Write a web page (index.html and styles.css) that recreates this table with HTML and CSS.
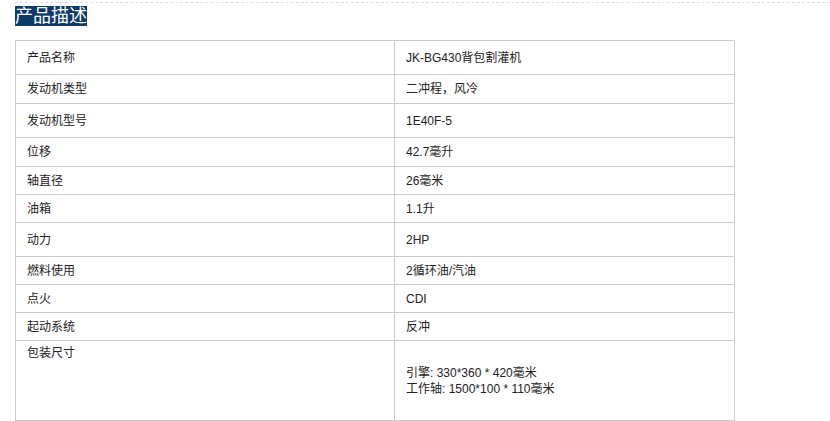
FILE: index.html
```html
<!DOCTYPE html>
<html lang="zh">
<head>
<meta charset="utf-8">
<title>产品描述</title>
<link rel="stylesheet" href="styles.css">
</head>
<body>
<div class="page">
  <div class="heading"><span class="heading-text">产品描述</span></div>
  <table class="spec">
    <tr class="tall"><td class="k">产品名称</td><td class="v">JK-BG430背包割灌机</td></tr>
    <tr class="mid"><td class="k">发动机类型</td><td class="v">二冲程，风冷</td></tr>
    <tr class="tall"><td class="k">发动机型号</td><td class="v">1E40F-5</td></tr>
    <tr class="mid"><td class="k">位移</td><td class="v">42.7毫升</td></tr>
    <tr class="short"><td class="k">轴直径</td><td class="v">26毫米</td></tr>
    <tr class="short"><td class="k">油箱</td><td class="v">1.1升</td></tr>
    <tr class="tall"><td class="k">动力</td><td class="v">2HP</td></tr>
    <tr class="short"><td class="k">燃料使用</td><td class="v">2循环油/汽油</td></tr>
    <tr class="short"><td class="k">点火</td><td class="v">CDI</td></tr>
    <tr class="short"><td class="k">起动系统</td><td class="v">反冲</td></tr>
    <tr class="big"><td class="k top">包装尺寸</td><td class="v">引擎: 330*360 * 420毫米<br>工作轴: 1500*100 * 110毫米</td></tr>
  </table>
</div>
</body>
</html>
```
FILE: styles.css
```css
html, body {
  margin: 0;
  padding: 0;
  background: #fff;
}
body {
  font-family: "Liberation Sans", "Noto Sans CJK SC", sans-serif;
  color: #222;
}
.page {
  margin-top: 2px;
  margin-left: 15px;
  border-top: 1px dashed #ddd;
  padding-top: 3px;
}
.heading {
  height: 20px;
  line-height: 20px;
  font-size: 18px;
}
.heading-text {
  display: inline-block;
  background: #0b3a6b;
  color: #fff;
  height: 20px;
  line-height: 20px;
}
.spec {
  margin-top: 14px;
  border-collapse: collapse;
  width: 720px;
  font-size: 12px;
  line-height: 16px;
}
.spec td {
  border: 1px solid #ccc;
  padding: 0 11px;
  vertical-align: middle;
}
.spec td.k {
  width: 356px;
}
.spec tr.tall td { height: 33px; }
.spec tr.mid td { height: 28px; }
.spec tr.short td { height: 27px; }
.spec tr.big td { height: 75px; }
.spec td.top {
  vertical-align: top;
  padding-top: 4px;
}
```
